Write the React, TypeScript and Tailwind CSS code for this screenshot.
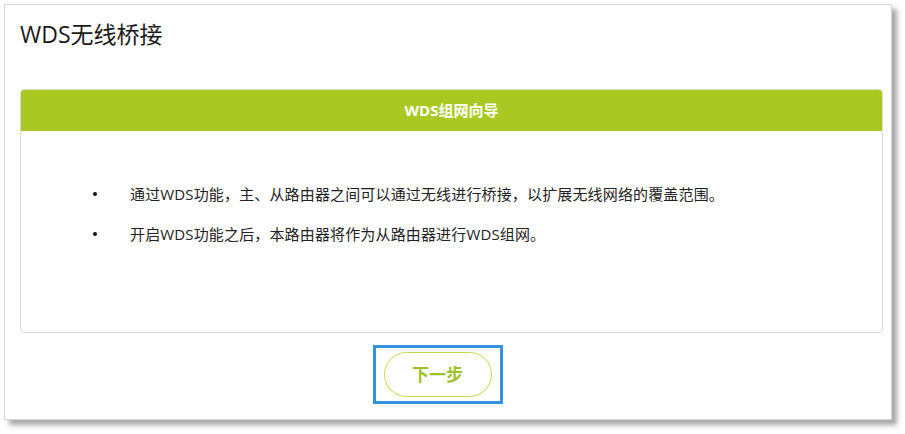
const tips = [
  "通过WDS功能，主、从路由器之间可以通过无线进行桥接，以扩展无线网络的覆盖范围。",
  "开启WDS功能之后，本路由器将作为从路由器进行WDS组网。",
];

export default function App() {
  return (
    <div
      className="w-[905px] h-[434px] bg-white pl-[4px] pt-[4px]"
      style={{ fontFamily: '"Open Sans", "Noto Sans CJK SC", sans-serif' }}
    >
      <div className="w-[888px] h-[416px] flex flex-col border border-[#d6d6d6] bg-white shadow-[5px_5px_5px_rgba(0,0,0,0.35)]">
        {/* page title */}
        <h1 className="pl-[15px] pt-[13px] text-[23px] leading-[32px] text-[#1a1a1a]">
          WDS无线桥接
        </h1>

        {/* wizard card */}
        <div className="mt-[39px] ml-[15px] w-[863px] h-[244px] rounded-[4px] border border-[#d9d9d9] flex flex-col overflow-hidden">
          <div className="h-[41px] shrink-0 bg-[#a9c922] flex items-center justify-center text-white text-[15px] font-bold">
            WDS组网向导
          </div>
          <ul className="pt-[53px] flex flex-col gap-[20px]">
            {tips.map((t) => (
              <li key={t} className="flex items-center text-[15px] leading-[20px] text-[#222]">
                <span className="w-[109px] pl-[72px] flex items-center">
                  <span className="w-[4px] h-[4px] rounded-full bg-[#111]" />
                </span>
                <span className="tracking-[0.15px]">{t}</span>
              </li>
            ))}
          </ul>
        </div>

        {/* next step button with focus frame */}
        <div className="mt-[12px] flex justify-center pr-[21px]">
          <div className="border-[3px] border-[#3592e0] px-[8px] py-[4px]">
            <button className="w-[108px] h-[45px] rounded-full border-[1.5px] border-[#c3da4e] text-[#9cc229] text-[17px] font-bold">
              下一步
            </button>
          </div>
        </div>
      </div>
    </div>
  );
}
